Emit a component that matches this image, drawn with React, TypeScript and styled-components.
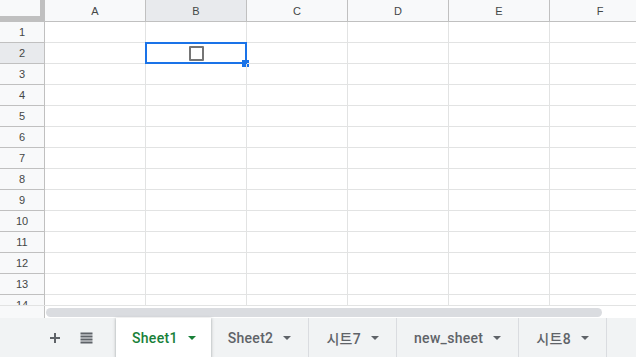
import styled, { createGlobalStyle } from "styled-components";

const GlobalStyle = createGlobalStyle`
  html, body {
    margin: 0;
    padding: 0;
    background: #ffffff;
  }
  body {
    font-family: Roboto, Arial, "Noto Sans CJK KR", sans-serif;
  }
`;

const COLUMNS = ["A", "B", "C", "D", "E", "F"];
const ROWS = Array.from({ length: 14 }, (_, i) => i + 1);
const SHEETS = ["Sheet1", "Sheet2", "시트7", "new_sheet", "시트8"];

const ACTIVE_COL = "B";
const ACTIVE_ROW = 2;

const Page = styled.div`
  width: 636px;
  height: 357px;
  display: flex;
  flex-direction: column;
  overflow: hidden;
  background: #ffffff;
`;

const GridArea = styled.div`
  height: 305px;
  overflow: hidden;
  flex-shrink: 0;
`;

const HeaderRow = styled.div`
  display: flex;
  height: 22px;
`;

const Corner = styled.div`
  width: 45px;
  height: 22px;
  flex-shrink: 0;
  box-sizing: border-box;
  background: #f8f9fa;
  border-right: 5px solid #c0c0c0;
  border-bottom: 6px solid #c0c0c0;
`;

const ColHeader = styled.div<{ $selected?: boolean }>`
  width: 101px;
  height: 22px;
  flex-shrink: 0;
  box-sizing: border-box;
  display: flex;
  align-items: center;
  justify-content: center;
  background: ${(p) => (p.$selected ? "#e8eaed" : "#f8f9fa")};
  border-right: 1px solid #c0c0c0;
  border-bottom: 1px solid #c0c0c0;
  font-family: Arial, "Liberation Sans", sans-serif;
  font-size: 11px;
  color: #444746;
`;

const DataRow = styled.div`
  display: flex;
  height: 21px;
`;

const RowHeader = styled.div<{ $selected?: boolean }>`
  width: 45px;
  height: 21px;
  flex-shrink: 0;
  box-sizing: border-box;
  display: flex;
  align-items: center;
  justify-content: center;
  background: ${(p) => (p.$selected ? "#e8eaed" : "#f8f9fa")};
  border-right: 1px solid #c0c0c0;
  border-bottom: 1px solid #c0c0c0;
  font-family: Arial, "Liberation Sans", sans-serif;
  font-size: 11px;
  color: #444746;
`;

const Cell = styled.div`
  position: relative;
  width: 101px;
  height: 21px;
  flex-shrink: 0;
  box-sizing: border-box;
  display: flex;
  align-items: center;
  justify-content: center;
  border-right: 1px solid #e2e3e3;
  border-bottom: 1px solid #e2e3e3;
`;

const Selection = styled.div`
  position: absolute;
  left: -1px;
  top: -1px;
  width: 102px;
  height: 22px;
  box-sizing: border-box;
  border: 2px solid #1a73e8;
  pointer-events: none;
`;

const FillHandle = styled.div`
  position: absolute;
  right: -4px;
  bottom: -5px;
  width: 7px;
  height: 7px;
  background: #1a73e8;
`;

const Checkbox = styled.div`
  width: 15px;
  height: 15px;
  box-sizing: border-box;
  border: 2px solid #757575;
  border-radius: 1px;
`;

const ScrollRow = styled.div`
  display: flex;
  height: 13px;
  flex-shrink: 0;
  box-sizing: border-box;
  border-top: 1px solid #e2e3e3;
`;

const ScrollGutter = styled.div`
  width: 45px;
  flex-shrink: 0;
  box-sizing: border-box;
  background: #f8f9fa;
  border-right: 1px solid #c0c0c0;
`;

const ScrollThumb = styled.div`
  width: 556px;
  height: 9px;
  margin: 2px 0 0 1px;
  border-radius: 5px;
  background: #dadce0;
`;

const TabBar = styled.div`
  flex: 1;
  display: flex;
  align-items: stretch;
  background: #f1f3f4;
`;

const Tools = styled.div`
  width: 116px;
  flex-shrink: 0;
  display: flex;
  align-items: center;
  gap: 1px;
  padding-left: 40px;
  box-sizing: border-box;
`;

const ToolButton = styled.div`
  width: 30px;
  height: 30px;
  display: flex;
  align-items: center;
  justify-content: center;
`;

const Tab = styled.div<{ $active?: boolean }>`
  display: flex;
  align-items: center;
  gap: 10px;
  padding: 0 ${(p) => (p.$active ? "14px 0 16px" : "17px 0 17px")};
  box-sizing: border-box;
  font-family: Roboto, "Noto Sans CJK KR", sans-serif;
  font-size: 14px;
  font-weight: 500;
  letter-spacing: 0.3px;
  color: ${(p) => (p.$active ? "#188038" : "#5f6368")};
  background: ${(p) => (p.$active ? "#ffffff" : "transparent")};
  border-right: 1px solid ${(p) => (p.$active ? "transparent" : "#dadce0")};
  box-shadow: ${(p) => (p.$active ? "0 1px 3px 1px rgba(60, 64, 67, 0.15), 0 1px 2px rgba(60, 64, 67, 0.3)" : "none")};
  position: relative;
`;

const Caret = styled.span<{ $active?: boolean }>`
  width: 0;
  height: 0;
  border-left: 4px solid transparent;
  border-right: 4px solid transparent;
  border-top: 4px solid ${(p) => (p.$active ? "#188038" : "#5f6368")};
`;

function PlusIcon() {
  return (
    <svg width="12" height="12" viewBox="0 0 12 12">
      <path d="M6 1v10M1 6h10" stroke="#5f6368" strokeWidth="2" />
    </svg>
  );
}

function ListIcon() {
  return (
    <svg width="13" height="12" viewBox="0 0 13 12">
      <path d="M0.5 1.5h12M0.5 4.5h12M0.5 7.5h12M0.5 10.5h12" stroke="#5f6368" strokeWidth="2" />
    </svg>
  );
}

export default function App() {
  return (
    <>
      <GlobalStyle />
      <Page>
        <GridArea>
          <HeaderRow>
            <Corner />
            {COLUMNS.map((c) => (
              <ColHeader key={c} $selected={c === ACTIVE_COL}>
                {c}
              </ColHeader>
            ))}
          </HeaderRow>
          {ROWS.map((r) => (
            <DataRow key={r}>
              <RowHeader $selected={r === ACTIVE_ROW}>{r}</RowHeader>
              {COLUMNS.map((c) => {
                const active = r === ACTIVE_ROW && c === ACTIVE_COL;
                return (
                  <Cell key={c}>
                    {active && <Checkbox />}
                    {active && (
                      <Selection>
                        <FillHandle />
                      </Selection>
                    )}
                  </Cell>
                );
              })}
            </DataRow>
          ))}
        </GridArea>

        <ScrollRow>
          <ScrollGutter />
          <ScrollThumb />
        </ScrollRow>

        <TabBar>
          <Tools>
            <ToolButton>
              <PlusIcon />
            </ToolButton>
            <ToolButton>
              <ListIcon />
            </ToolButton>
          </Tools>
          {SHEETS.map((name, i) => (
            <Tab key={name} $active={i === 0}>
              {name}
              <Caret $active={i === 0} />
            </Tab>
          ))}
        </TabBar>
      </Page>
    </>
  );
}
